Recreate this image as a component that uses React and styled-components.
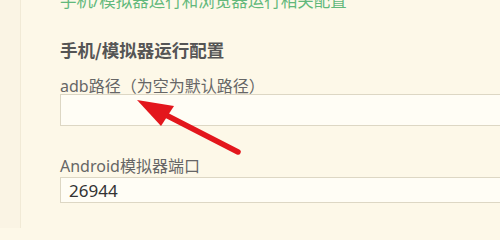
import React from 'react'
import styled, { createGlobalStyle } from 'styled-components'

const Global = createGlobalStyle`
  html, body {
    margin: 0;
    padding: 0;
    background: #fdf8e8;
  }
  #root {
    width: 500px;
    height: 228px;
    overflow: hidden;
  }
`

const Page = styled.div`
  position: relative;
  display: flex;
  width: 500px;
  height: 228px;
  overflow: hidden;
  font-family: "Noto Sans", "Noto Sans CJK SC", sans-serif;
  background: #fdf8e8;
`

const Side = styled.div`
  flex: 0 0 20px;
  background: #faf4e4;
  border-right: 1px solid #f1ead6;
`

const Main = styled.div`
  flex: 1;
  padding-left: 39px;
  min-width: 0;
`

const Note = styled.div`
  margin-top: -10px;
  font-size: 16.5px;
  line-height: 22px;
  color: #62b87b;
  white-space: nowrap;
`

const Heading = styled.div`
  margin-top: 26px;
  font-family: "Noto Sans CJK SC", sans-serif;
  font-size: 17.5px;
  font-weight: 700;
  line-height: 24px;
  color: #555;
  white-space: nowrap;
`

const Label = styled.div`
  margin-top: ${p => p.$gap || 0}px;
  font-size: 16px;
  line-height: ${p => p.$lh || 22}px;
  color: #666;
  white-space: nowrap;
`

const Input = styled.input`
  display: block;
  box-sizing: border-box;
  width: 460px;
  height: ${p => p.$h}px;
  margin: 0;
  padding: 0 8px;
  border: 1px solid #ddd7c4;
  border-right: none;
  background: #fffdf5;
  font-family: "Noto Sans", "Noto Sans CJK SC", sans-serif;
  font-size: 17px;
  color: #333;
  outline: none;
`

const Arrow = styled.svg`
  position: absolute;
  left: 0;
  top: 0;
  pointer-events: none;
`

export default function App() {
  return (
    <Page>
      <Global />
      <Side />
      <Main>
        <Note>手机/模拟器运行和浏览器运行相关配置</Note>
        <Heading>手机/模拟器运行配置</Heading>
        <Label $gap={16} $lh={16}>adb路径（为空为默认路径）</Label>
        <Input $h={32} defaultValue="" />
        <Label $gap={29}>Android模拟器端口</Label>
        <Input $h={26} defaultValue="26944" />
      </Main>
      <Arrow width="500" height="228" viewBox="0 0 500 228">
        <line x1="238" y1="152" x2="160" y2="112" stroke="#e3161c" strokeWidth="5.5" strokeLinecap="round" />
        <polygon points="137,100 174,106 161,126" fill="#e3161c" />
      </Arrow>
    </Page>
  )
}
